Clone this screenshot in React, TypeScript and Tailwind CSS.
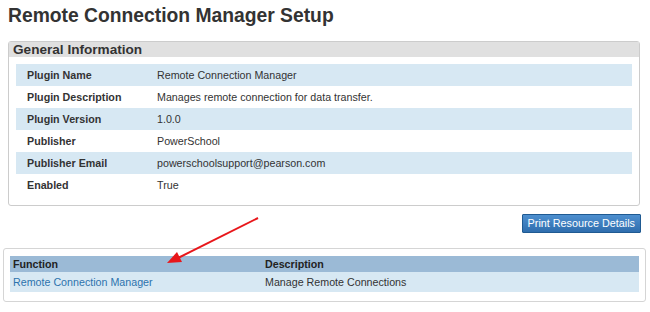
import React from "react";

const rows: [string, string][] = [
  ["Plugin Name", "Remote Connection Manager"],
  ["Plugin Description", "Manages remote connection for data transfer."],
  ["Plugin Version", "1.0.0"],
  ["Publisher", "PowerSchool"],
  ["Publisher Email", "powerschoolsupport@pearson.com"],
  ["Enabled", "True"],
];

export default function App() {
  return (
    <div
      className="relative w-[650px] h-[312px] bg-white text-[#333333] overflow-hidden"
      style={{ fontFamily: '"Liberation Sans", Arial, sans-serif' }}
    >
      <h1 className="pl-[8px] pt-[5px] h-[41px] text-[19.3px] leading-[22px] font-bold text-[#333333]">
        Remote Connection Manager Setup
      </h1>
      <div className="ml-[8px] w-[632px] border border-[#cccccc] rounded-[3px] pb-[9px]">
        <div className="h-[15px] bg-[#e0e0e0] pl-[4px] text-[13.6px] leading-[16px] font-bold text-[#333333]">
          General Information
        </div>
        <div className="mt-[7px] ml-[7px] mr-[7px]">
          {rows.map(([k, v], i) => (
            <div
              key={k}
              className={`flex h-[22px] items-center text-[10.7px] ${i % 2 === 0 ? "bg-[#d7e8f3]" : "bg-white"}`}
            >
              <div className="w-[141px] pl-[11px] font-bold">{k}</div>
              <div>{v}</div>
            </div>
          ))}
        </div>
      </div>
      <div className="flex justify-end pr-[9px] mt-[8px]">
        <button className="h-[19px] px-[5px] text-[10.8px] leading-[17px] text-white border border-[#1f5a92] bg-gradient-to-b from-[#4d8fcf] to-[#2f6eae] rounded-[1px]">
          Print Resource Details
        </button>
      </div>
      <div className="ml-[3px] mt-[15px] w-[643px] h-[54px] border border-[#d5d5d5] rounded-[3px] pt-[7px] pl-[6px]">
        <div className="w-[629px] text-[10.7px]">
          <div className="flex h-[16px] items-center bg-[#9bbad6] font-bold text-[#222222]">
            <div className="w-[255px] pl-[3px]">Function</div>
            <div>Description</div>
          </div>
          <div className="flex h-[20px] items-center bg-[#d7e8f3]">
            <div className="w-[255px] pl-[3px] text-[#2d73ad]">Remote Connection Manager</div>
            <div>Manage Remote Connections</div>
          </div>
        </div>
      </div>
      <svg className="absolute left-0 top-0" width="650" height="312" viewBox="0 0 650 312">
        <line x1="258" y1="218" x2="178" y2="258" stroke="#e8161a" strokeWidth="2" />
        <polygon points="167,263 177,252 182,262" fill="#e8161a" />
      </svg>
    </div>
  );
}
